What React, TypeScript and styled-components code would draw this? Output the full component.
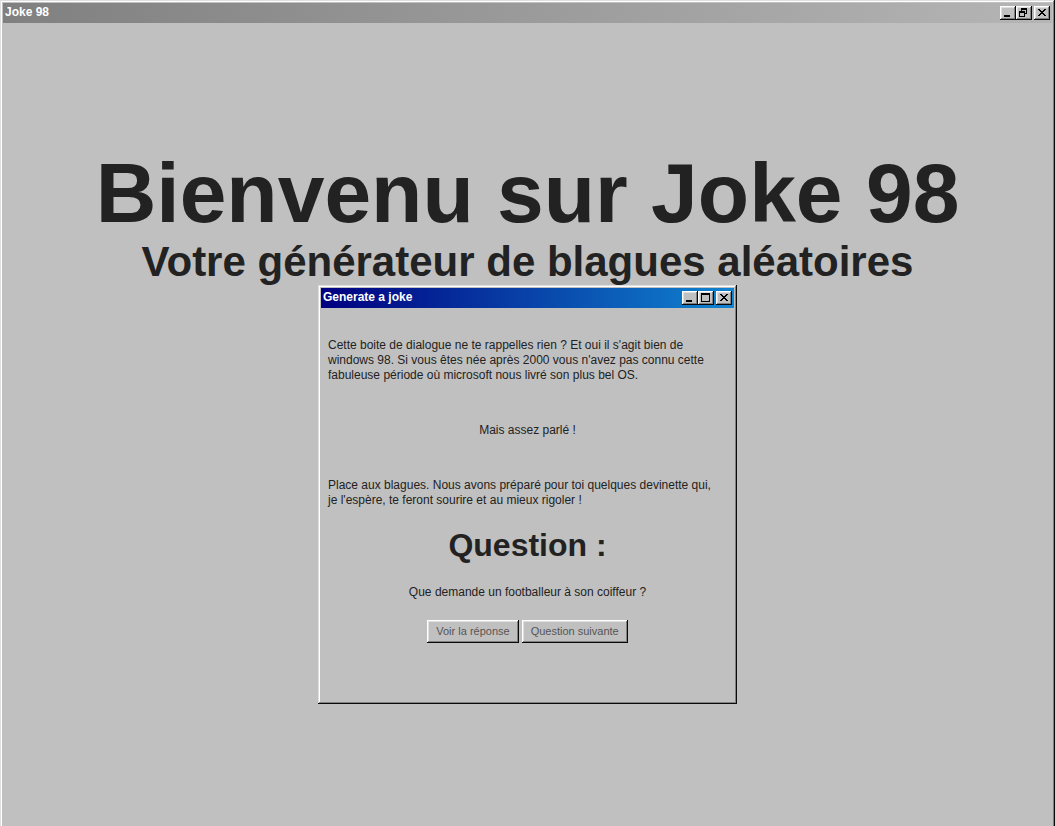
import React from "react";
import styled, { createGlobalStyle, css } from "styled-components";

const sans = `"Liberation Sans", Arial, sans-serif`;

const GlobalStyle = createGlobalStyle`
  *, *::before, *::after { box-sizing: border-box; }
  html, body { margin: 0; background: #c0c0c0; overflow: hidden; }
  body { color: #222222; font: 12px/15px ${sans}; }
`;

const raised = css`
  box-shadow: inset -1px -1px #0a0a0a, inset 1px 1px #ffffff,
    inset -2px -2px #808080, inset 2px 2px #dfdfdf;
`;

const windowFrame = css`
  background: #c0c0c0;
  padding: 3px;
  box-shadow: inset -1px -1px #0a0a0a, inset 1px 1px #dfdfdf,
    inset -2px -2px #808080, inset 2px 2px #ffffff;
`;

const Desktop = styled.div`
  ${windowFrame}
  min-height: calc(100vh + 8px);
`;

const Dialog = styled.section`
  ${windowFrame}
  width: 100%;
  max-width: 419px;
  min-height: 419px;
`;

const TitleBar = styled.header<{ $inactive?: boolean }>`
  display: flex;
  align-items: center;
  justify-content: space-between;
  height: 20px;
  padding: 0 2px;
  background: ${(p) =>
    p.$inactive
      ? "linear-gradient(90deg, #808080, #b5b5b5)"
      : "linear-gradient(90deg, #000080, #1084d0)"};
`;

const TitleText = styled.span`
  padding-bottom: 2px;
  color: #ffffff;
  font-weight: bold;
  line-height: 18px;
`;

const Controls = styled.div`
  display: flex;
`;

const ControlButton = styled.button`
  ${raised}
  display: block;
  width: 16px;
  height: 14px;
  padding: 0;
  border: 0;
  background: #c0c0c0;

  &:last-child { margin-left: 2px; }
  svg { display: block; }
`;

const Main = styled.main`
  display: flex;
  flex-direction: column;
  align-items: center;
  padding-top: 120px;
`;

const Heading = styled.h1`
  margin: 0;
  font-size: 84px;
  line-height: 100px;
  white-space: nowrap;
`;

const Subheading = styled.h2`
  margin: 0 0 4px;
  font-size: 42px;
  line-height: 38px;
  white-space: nowrap;
`;

const DialogBody = styled.div`
  display: flex;
  flex-direction: column;
  align-items: center;
  padding: 30px 7px;
`;

const Paragraph = styled.p`
  align-self: stretch;
  margin: 0;
  white-space: nowrap;
`;

const Aside = styled.p`
  margin: 40px 0;
`;

const QuestionTitle = styled.h3`
  margin: 17px 0 20px;
  font-size: 32px;
  line-height: 40px;
`;

const Question = styled.p`
  margin: 0 0 20px;
`;

const Actions = styled.div`
  display: flex;
  gap: 3px;
`;

const ActionButton = styled.button`
  ${raised}
  height: 23px;
  padding: 0 9px;
  border: 0;
  background: #c0c0c0;
  color: #555555;
  font: 11px/15px ${sans};
`;

type Glyph = "minimize" | "maximize" | "restore" | "close";

const glyphs: Record<Glyph, string> = {
  minimize: "M4 9h6v2H4z",
  maximize: "M3 2h9v9H3zM4 4v6h7V4z",
  restore: "M5 2h6v6H9V7h1V4H6v1h3v6H3V5h2zM4 7v3h4V7z",
  close:
    "M4 3h2v1h1v1h2V4h1V3h2v1h-1v1h-1v1H9v1h1v1h1v1h1v1h-2V9H9V8H7v1H6v1H4V9h1V8h1V7h1V6H6V5H5V4H4z",
};

function WindowControl({ glyph, label }: { glyph: Glyph; label: string }) {
  return (
    <ControlButton type="button" aria-label={label}>
      <svg width="16" height="14" viewBox="0 0 16 14" shapeRendering="crispEdges" aria-hidden="true">
        <path fill="#000000" fillRule="evenodd" d={glyphs[glyph]} />
      </svg>
    </ControlButton>
  );
}

export default function App() {
  return (
    <>
      <GlobalStyle />
      <Desktop>
        <TitleBar $inactive>
          <TitleText>Joke 98</TitleText>
          <Controls>
            <WindowControl glyph="minimize" label="Minimize" />
            <WindowControl glyph="restore" label="Restore" />
            <WindowControl glyph="close" label="Close" />
          </Controls>
        </TitleBar>
        <Main>
          <Heading>Bienvenu sur Joke 98</Heading>
          <Subheading>Votre générateur de blagues aléatoires</Subheading>
          <Dialog aria-label="Generate a joke">
            <TitleBar>
              <TitleText>Generate a joke</TitleText>
              <Controls>
                <WindowControl glyph="minimize" label="Minimize" />
                <WindowControl glyph="maximize" label="Maximize" />
                <WindowControl glyph="close" label="Close" />
              </Controls>
            </TitleBar>
            <DialogBody>
              <Paragraph>
                Cette boite de dialogue ne te rappelles rien ? Et oui il s'agit bien de
                <br />
                windows 98. Si vous êtes née après 2000 vous n'avez pas connu cette
                <br />
                fabuleuse période où microsoft nous livré son plus bel OS.
              </Paragraph>
              <Aside>Mais assez parlé !</Aside>
              <Paragraph>
                Place aux blagues. Nous avons préparé pour toi quelques devinette qui,
                <br />
                je l'espère, te feront sourire et au mieux rigoler !
              </Paragraph>
              <QuestionTitle>Question :</QuestionTitle>
              <Question>Que demande un footballeur à son coiffeur ?</Question>
              <Actions>
                <ActionButton type="button">Voir la réponse</ActionButton>
                <ActionButton type="button">Question suivante</ActionButton>
              </Actions>
            </DialogBody>
          </Dialog>
        </Main>
      </Desktop>
    </>
  );
}
